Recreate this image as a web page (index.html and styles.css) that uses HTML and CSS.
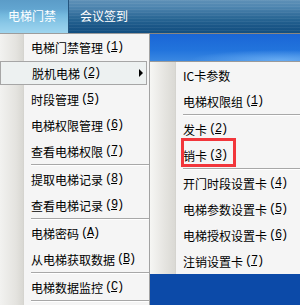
FILE: index.html
```html
<!DOCTYPE html>
<html>
<head>
<meta charset="utf-8">
<link rel="stylesheet" href="styles.css">
</head>
<body>
<div class="screen">
  <div class="topbar">
    <div class="tab tab-active">电梯门禁</div>
    <div class="tab tab-other">会议签到</div>
    <div class="tab-rest"></div>
  </div>
  <div class="main">
    <div class="menu">
      <div class="item">电梯门禁管理<span class="key">(<u>1</u>)</span></div>
      <div class="item hover">脱机电梯<span class="key">(<u>2</u>)</span><span class="arrow"></span></div>
      <div class="item">时段管理<span class="key">(<u>5</u>)</span></div>
      <div class="item">电梯权限管理<span class="key">(<u>6</u>)</span></div>
      <div class="item">查看电梯权限<span class="key">(<u>7</u>)</span></div>
      <div class="sep"></div>
      <div class="item">提取电梯记录<span class="key">(<u>8</u>)</span></div>
      <div class="item">查看电梯记录<span class="key">(<u>9</u>)</span></div>
      <div class="sep"></div>
      <div class="item">电梯密码<span class="key">(<u>A</u>)</span></div>
      <div class="item">从电梯获取数据<span class="key">(<u>B</u>)</span></div>
      <div class="sep"></div>
      <div class="item">电梯数据监控<span class="key">(<u>C</u>)</span></div>
      <div class="sep"></div>
    </div>
    <div class="side">
      <div class="desk"></div>
      <div class="submenu">
        <div class="item">IC卡参数</div>
        <div class="item">电梯权限组<span class="key">(<u>1</u>)</span></div>
        <div class="sep"></div>
        <div class="item">发卡<span class="key">(<u>2</u>)</span></div>
        <div class="item">销卡<span class="key">(<u>3</u>)</span></div>
        <div class="sep"></div>
        <div class="item">开门时段设置卡<span class="key">(<u>4</u>)</span></div>
        <div class="item">电梯参数设置卡<span class="key">(<u>5</u>)</span></div>
        <div class="item">电梯授权设置卡<span class="key">(<u>6</u>)</span></div>
        <div class="item">注销设置卡<span class="key">(<u>7</u>)</span></div>
      </div>
      <div class="desk-low"></div>
    </div>
  </div>
  <div class="mark"></div>
</div>
</body>
</html>
```

FILE: styles.css
```css
html, body {
  margin: 0;
  padding: 0;
}
body {
  width: 300px;
  height: 305px;
  overflow: hidden;
  font-family: "Noto Sans CJK SC", "Liberation Sans", sans-serif;
  font-size: 12px;
  color: #000;
}
.screen {
  position: relative;
  width: 300px;
  height: 305px;
  overflow: hidden;
}
.topbar {
  display: flex;
  height: 33px;
}
.tab {
  color: #fff;
  line-height: 32px;
  white-space: nowrap;
}
.tab-active {
  width: 60px;
  padding-left: 8px;
  border-right: 1px solid #24557e;
  background: linear-gradient(#5b9cc8 0, #62a5d0 9px, #74b9de 15px, #8cc9e8 24px, #9ed5ef 33px);
}
.tab-other {
  padding-left: 11px;
  width: 70px;
}
.tab-other, .tab-rest {
  background:
    repeating-linear-gradient(rgba(255,255,255,0.06) 0 1px, rgba(0,0,0,0) 1px 3px),
    linear-gradient(#5e90b7 0, #4f86b0 7px, #3a73a0 13px, #276593 19px, #1a5687 26px, #134f80 33px);
}
.tab-rest {
  flex: 1;
}
.main {
  display: flex;
  height: 272px;
}
.menu {
  width: 149px;
  border-top: 1px solid #9c9c9c;
  border-right: 1px solid #a2a2a2;
  background: linear-gradient(to right, #f2f2f0 0, #e4e3df 16px, #d9d8d3 23px, #d2d1cc 24px, #f5f5f5 24px);
}
.item {
  display: flex;
  align-items: center;
  height: 26px;
  padding-left: 31px;
  white-space: nowrap;
  box-sizing: border-box;
}
.key {
  font-family: "Liberation Mono", "DejaVu Sans Mono", monospace;
  font-size: 12px;
  letter-spacing: -1.2px;
  margin-left: 2px;
}
.key u {
  text-underline-offset: 1px;
}
.hover {
  height: 24px;
  margin: 1px 2px 1px 0;
  padding-left: 31px;
  border: 1px solid #a6a6a6;
  background: #edf1f1;
}
.arrow {
  margin-left: auto;
  margin-right: 3px;
  width: 0;
  height: 0;
  border-left: 4px solid #000;
  border-top: 4px solid transparent;
  border-bottom: 4px solid transparent;
}
.sep {
  height: 0;
  margin-left: 31px;
  border-top: 1px solid #a8a8a8;
  border-bottom: 1px solid #ffffff;
}
.side {
  flex: 1;
  display: flex;
  flex-direction: column;
}
.desk {
  height: 27px;
  border-top: 1px solid #8a8680;
  border-bottom: 1px solid #9a9a9a;
  background:
    radial-gradient(ellipse 90px 10px at 130px 26px, rgba(140,200,255,0.55), rgba(140,200,255,0)),
    linear-gradient(#1a66d6, #2274dc 60%, #3a88e2);
}
.submenu {
  background: linear-gradient(to right, #f6f6f4 0, #e6e5e1 14px, #dad9d4 25px, #d0cfca 26px, #f5f5f5 26px);
}
.submenu .item {
  padding-left: 33px;
}
.submenu .sep {
  margin-left: 33px;
}
.desk-low {
  flex: 1;
  background: #0c4aa8;
}
.mark {
  position: absolute;
  left: 181px;
  top: 138px;
  width: 49px;
  height: 23px;
  border: 3px solid #f2363b;
}
```
